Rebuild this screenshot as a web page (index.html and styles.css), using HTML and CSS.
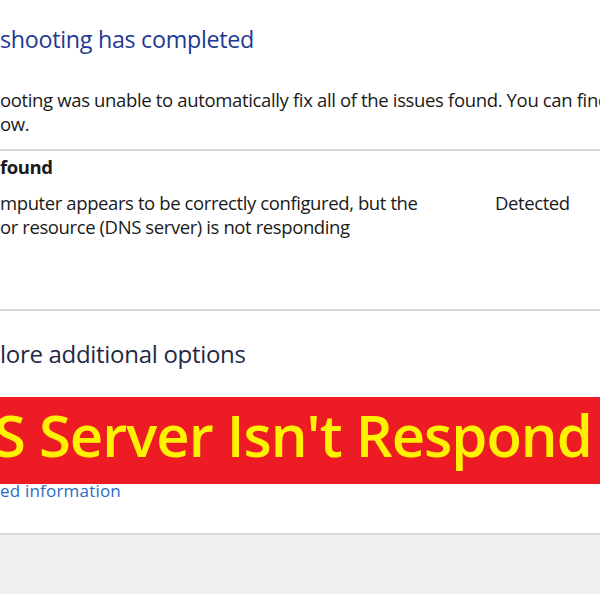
FILE: index.html
```html
<!DOCTYPE html>
<html>
<head>
<meta charset="utf-8">
<link rel="stylesheet" href="styles.css">
</head>
<body>
<div class="panel">
  <h1 class="title">shooting has completed</h1>
  <p class="intro">ooting was unable to automatically fix all of the issues found. You can find<br>ow.</p>
  <div class="rule"></div>
  <div class="found">
    <div class="found-head">found</div>
    <div class="issue">
      <div class="issue-text">mputer appears to be correctly configured, but the<br>or resource (DNS server) is not responding</div>
      <div class="issue-status">Detected</div>
    </div>
  </div>
  <div class="rule"></div>
  <div class="explore">lore additional options</div>
  <div class="link-area">
    <a class="link" href="#">ed information</a>
    <div class="banner"><span class="banner-text">S Server Isn't Respond</span></div>
  </div>
</div>
<div class="footer"></div>
</body>
</html>
```

FILE: styles.css
```css
html, body {
  margin: 0;
  padding: 0;
  height: 100%;
  overflow: hidden;
  background: #f0f0f0;
}
body {
  font-family: "Open Sans", "Noto Sans", sans-serif;
  color: #1a1a1a;
  display: flex;
  flex-direction: column;
}
.panel {
  background: #ffffff;
  height: 533px;
  border-bottom: 2px solid #dadada;
  display: flex;
  flex-direction: column;
  flex: none;
}
.title {
  margin: 0;
  padding-top: 24px;
  font-size: 23.3px;
  font-weight: 400;
  line-height: 30px;
  height: 30px;
  color: #1f3a93;
  letter-spacing: -0.3px;
  white-space: nowrap;
}
.intro {
  margin: 0;
  padding-top: 34px;
  padding-bottom: 13px;
  font-size: 18.5px;
  line-height: 24px;
  letter-spacing: -0.35px;
  white-space: nowrap;
  overflow: hidden;
}
.rule {
  height: 2px;
  background: #d8d8d8;
  flex: none;
}
.found {
  height: 158px;
  flex: none;
}
.found-head {
  font-weight: 700;
  font-size: 18.5px;
  line-height: 24px;
  padding-top: 4px;
  letter-spacing: -0.4px;
}
.issue {
  display: flex;
  padding-top: 12px;
  font-size: 18.5px;
  line-height: 24px;
  letter-spacing: -0.4px;
}
.issue-text {
  width: 495px;
  flex: none;
  white-space: nowrap;
}
.issue-status {
  flex: none;
}
.explore {
  padding-top: 28px;
  font-size: 24px;
  line-height: 30px;
  height: 30px;
  color: #1f2a44;
  letter-spacing: -0.3px;
}
.link-area {
  position: relative;
  padding-top: 111px;
}
.link {
  display: block;
  font-size: 17px;
  line-height: 22px;
  color: #2a6bc8;
  text-decoration: none;
  letter-spacing: 0.2px;
}
.banner {
  position: absolute;
  left: 0;
  right: 0;
  top: 28px;
  height: 87px;
  background: #ed1c24;
  overflow: hidden;
  white-space: nowrap;
}
.banner-text {
  display: block;
  margin-left: -6px;
  font-family: "Open Sans", sans-serif;
  font-weight: 600;
  font-size: 58px;
  line-height: 75px;
  color: #fff200;
  letter-spacing: -1px;
}
.footer {
  flex: 1;
  background: #f0f0f0;
}
```
